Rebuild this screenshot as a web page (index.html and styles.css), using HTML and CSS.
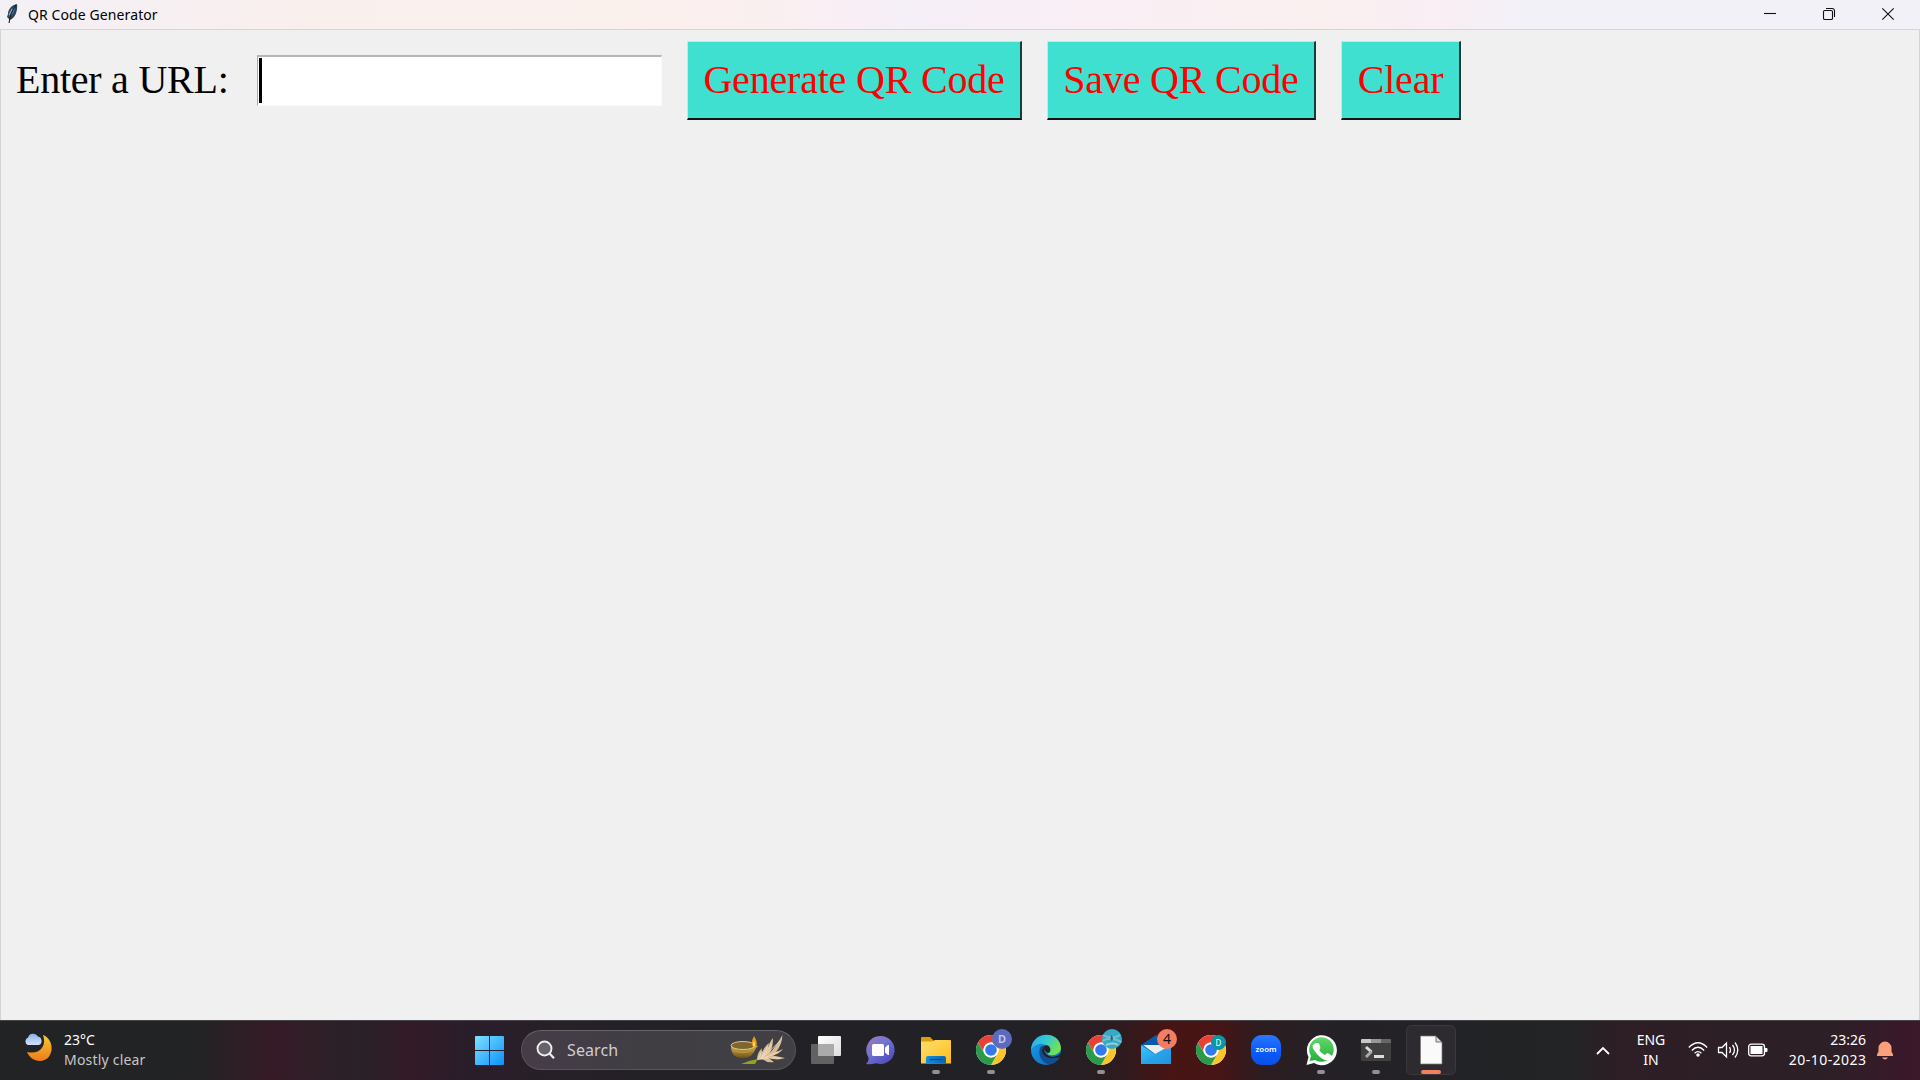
FILE: index.html
```html
<!DOCTYPE html>
<html lang="en">
<head>
<meta charset="utf-8">
<title>QR Code Generator</title>
<link rel="stylesheet" href="styles.css">
</head>
<body>
<div class="desktop">
  <header class="titlebar">
    <svg class="feather" viewBox="0 0 14 22"><path d="M12 1C7 2 3 6 3 11l-1 3 2 2v4l1-3c5-2 8-9 7-16z" fill="#34414d"/><path d="M10 3C6 6 4 10 4 14l2-1c3-3 4-6 4-10z" fill="#3f78bd"/><path d="M11 2C7 7 5 13 4 20" stroke="#10161c" fill="none"/><path d="M7 6l-3 6" stroke="#9db9d2" fill="none"/></svg>
    <h1 class="title">QR Code Generator</h1>
    <div class="controls">
      <svg class="control" viewBox="0 0 14 14"><path d="M1 6.500h12"/></svg>
      <svg class="control" viewBox="0 0 14 14"><rect x="1.500" y="3.500" width="9" height="9" rx="1.300"/><path d="M4 1.500h6.200a2.300 2.300 0 0 1 2.300 2.300V10"/></svg>
      <svg class="control" viewBox="0 0 14 14"><path d="M1.300 1.300l11.400 11.400M12.700 1.300L1.300 12.700"/></svg>
    </div>
  </header>
  <main class="window">
    <div class="form">
      <label class="label" for="url">Enter a URL:</label>
      <div class="entry" id="url"><span class="caret"></span></div>
      <button class="button generate">Generate QR Code</button>
      <button class="button save">Save QR Code</button>
      <button class="button clear">Clear</button>
    </div>
  </main>
  <footer class="taskbar">
    <svg class="defs" width="0" height="0">
      <defs>
        <linearGradient id="moon" x2="0" y2="1"><stop stop-color="#f6c92f"/><stop offset="1" stop-color="#ef7a1c"/></linearGradient>
        <linearGradient id="cloud" x2="0" y2="1"><stop stop-color="#8fb0ee"/><stop offset="1" stop-color="#d3e2fa"/></linearGradient>
        <linearGradient id="win" x2="1" y2="1" gradientUnits="userSpaceOnUse" x1="0" y1="0" gradientTransform="scale(29)"><stop stop-color="#7fe0ff"/><stop offset="1" stop-color="#0a92fb"/></linearGradient>
        <linearGradient id="chat" x2="0.8" y2="1"><stop stop-color="#a777b8"/><stop offset=".45" stop-color="#7176cf"/><stop offset="1" stop-color="#4b49bd"/></linearGradient>
        <linearGradient id="folder" x2="1" y2="1"><stop stop-color="#ffdf70"/><stop offset="1" stop-color="#fdbd16"/></linearGradient>
        <linearGradient id="tray" x2="1"><stop stop-color="#1190df"/><stop offset="1" stop-color="#0964b3"/></linearGradient>
        <linearGradient id="edgeTop" x2="1" y2=".5"><stop stop-color="#28a9ec"/><stop offset=".5" stop-color="#34c7d7"/><stop offset="1" stop-color="#72e34f"/></linearGradient>
        <linearGradient id="edgeSide" x2="1" y2="1"><stop stop-color="#1ca0e8"/><stop offset="1" stop-color="#0864bd"/></linearGradient>
        <linearGradient id="mail" x2="1" y2="1"><stop stop-color="#3cc5fa"/><stop offset="1" stop-color="#158cdd"/></linearGradient>
        <linearGradient id="zoomfill" x2="0" y2="1"><stop stop-color="#2a78ff"/><stop offset=".5" stop-color="#0b5cff"/><stop offset="1" stop-color="#0a50e5"/></linearGradient>
        <linearGradient id="green" x2="0" y2="1"><stop stop-color="#62d86b"/><stop offset="1" stop-color="#20b038"/></linearGradient>
        <linearGradient id="bowl" x2="0" y2="1"><stop stop-color="#d6b65f"/><stop offset="1" stop-color="#735013"/></linearGradient>
        <linearGradient id="pane" x2="1" y2="1"><stop stop-color="#fff"/><stop offset="1" stop-color="#ddd"/></linearGradient>
        <g id="chrome">
          <circle r="15" fill="#fff"/>
          <path d="M-13 -7.500A15 15 0 0 1 13 -7.500L0 -7.500A7.500 7.500 0 0 0 -6.500 3.750Z" fill="#e94235"/>
          <path d="M13 -7.500A15 15 0 0 1 0 15L6.500 3.750A7.500 7.500 0 0 0 0 -7.500Z" fill="#fcc52c"/>
          <path d="M0 15A15 15 0 0 1 -13 -7.500L-6.500 3.750A7.500 7.500 0 0 0 6.500 3.750Z" fill="#2b9a4b"/>
          <circle r="7.500" fill="#fff"/><circle r="5.800" fill="#3279ed"/>
        </g>
      </defs>
    </svg>
    <section class="weather">
      <svg class="weather-icon" viewBox="0 0 30 30"><path d="M19 2c13 5 11 26-3 26-6 0-11-4-13-9 13 3 20-6 16-17z" fill="url(#moon)"/><path d="M4 12a4 4 0 0 1 0-7.500A5.500 5.500 0 0 1 14 3.500a4.500 4.500 0 0 1 1 8.500z" fill="url(#cloud)"/></svg>
      <div class="weather-text"><span class="temperature">23°C</span><span class="condition">Mostly clear</span></div>
    </section>
    <svg class="start" viewBox="0 0 29 29" fill="url(#win)"><path d="M1 0h13v14H0V1a1 1 0 0 1 1-1zM15 0h13a1 1 0 0 1 1 1v13H15zM0 15h14v14H1a1 1 0 0 1-1-1zM15 15h14v13a1 1 0 0 1-1 1H15z"/></svg>
    <div class="search">
      <svg class="search-icon" viewBox="0 0 20 20"><circle cx="8.500" cy="8.500" r="7" fill="#67636d" stroke="#eee" stroke-width="1.900"/><path d="M13.500 13.500l4.500 4.800" stroke="#eee" stroke-width="2.200"/></svg>
      <span class="search-text">Search</span>
      <svg class="diya" viewBox="0 0 56 32">
        <path d="M11 30q9-4 17-5l-3 5z" fill="#93a31b"/>
        <path d="M27 26Q27 19 32 14L31 20Q35 12 39 9L37 18Q39 8 43 4Q43 13 40 19Q47 11 52.500 1Q52 11 46 18L53 15Q49 20 43 21.500L55 24Q47 27 38 23.500L44 28Q37 29 33 25.500z" fill="#d9bd97"/>
        <path d="M28 26L32 17M30 25L38 13M31 25L42 10M31 25L50 7M32 25L48 18M34 24L51 24" stroke="#f4e4cb" fill="none" stroke-width=".8"/>
        <path d="M1 12q0 12 11 12t14-10l2-2-5-1z" fill="url(#bowl)"/><ellipse cx="13" cy="11.500" rx="12" ry="4" fill="#7d6730" stroke="#e0c681"/><path d="M3 16q9 5 20 0" fill="none" stroke="#c49c3c"/>
        <path d="M24 2q5 8 1 12q-6-3-1-12z" fill="#f29b13"/><path d="M24 7q2 4 0 6q-2-2 0-6" fill="#ffe567"/>
      </svg>
    </div>
    <nav class="apps">
      <svg class="app" viewBox="-27 -30 55 60"><rect x="-15" y="-6" width="23" height="20" rx="1" fill="#626262"/><rect x="-8" y="-14" width="23" height="20" rx="1" fill="url(#pane)"/><path d="M-8-6H8V6H-8z" fill="#aaa"/></svg>
      <svg class="app" viewBox="-27 -30 55 60"><path d="M-.5-14A14 14 0 1 1-5 13.200Q-10 14.500-15 14Q-12 11-12.500 7.500A14 14 0 0 1-.5-14z" fill="url(#chat)"/><rect x="-9" y="-6" width="12" height="12" rx="1.500" fill="#fff"/><path d="M4-2.500L7-5h1V5H7L4 2.500z" fill="#fff"/></svg>
      <svg class="app" viewBox="-27 -30 55 60"><path d="M-15-12q0-1 1-1h8l4 4v4h-13z" fill="#dd9e08"/><path d="M-15-8.500h11l3-1.500h15q1 0 1 1v22q0 .5-.5.500h-29q-.5 0-.5-.5z" fill="url(#folder)"/><path d="M-10 13.500V8q0-2 2-2H8q2 0 2 2v5.500z" fill="url(#tray)"/><path d="M-6.500 9.500h13" stroke="#064878" stroke-width="1.200"/><rect class="run" x="-4" y="20" width="8" height="4" rx="2"/></svg>
      <svg class="app" viewBox="-27 -30 55 60"><use href="#chrome"/><circle cx="11" cy="-11" r="10" fill="#5c6bc0"/><text class="badge pale" x="11" y="-7">D</text><rect class="run" x="-4" y="20" width="8" height="4" rx="2"/></svg>
      <svg class="app" viewBox="-27 -30 55 60"><circle r="15" fill="url(#edgeSide)"/><path d="M-15 0C-14-20 14-20 15-2C15 3 9 6 4 5C0 4 3 3 3 0C3-5-3-7-7-6C-11-5-14-3-15 0z" fill="url(#edgeTop)"/><path d="M-6-2C-9 8-1 16 6 13.700C10 12.500 13 9 14 7C5 12-4 5-2-4Q-5-5-6-2z" fill="#114d91"/><path d="M-2-4C-4 3 4 10 13 5L15 3V7L14 7C4 11-4 6-4 0z" fill="#222126"/><path d="M-2-4C4-7 6 1 3 3Q-3 2-2-4z" fill="#222126"/></svg>
      <svg class="app" viewBox="-27 -30 55 60"><use href="#chrome"/><circle cx="11" cy="-11" r="10" fill="#32abc7"/><path d="M2-15q9 5 17 0M1.500-9q8-5 19 1" stroke="#76bfd2" stroke-width="2" fill="none"/><path d="M5-5q7-3 12 0" stroke="#a7cbd1" stroke-width="2" fill="none"/><path d="M10.500-15q3 4 0 6q-2-2 0-6z" fill="#375f7e"/><rect class="run" x="-4" y="20" width="8" height="4" rx="2"/></svg>
      <svg class="app" viewBox="-27 -30 55 60"><path d="M-15-5L0-15 15-5V5h-30z" fill="#075bac"/><path d="M-13-5H13L2 6z" fill="#eee"/><path d="M-15-5L-1 4 15-5V14h-30z" fill="url(#mail)"/><path d="M-15 14L15-5V14z" fill="#2b9ee4" opacity=".5"/><circle cx="11" cy="-11" r="10" fill="#f47d64"/><text class="badge count" x="11" y="-6">4</text></svg>
      <svg class="app" viewBox="-27 -30 55 60"><use href="#chrome"/><circle cx="7.500" cy="-7.500" r="7.500" fill="#0897a7"/><text class="badge small" x="7.500" y="-4.500">D</text></svg>
      <svg class="app" viewBox="-27 -30 55 60"><rect x="-15" y="-15" width="30" height="30" rx="11" fill="url(#zoomfill)"/><text class="zoom" x="0" y="2" textLength="21" lengthAdjust="spacingAndGlyphs">zoom</text></svg>
      <svg class="app" viewBox="-27 -30 55 60"><path d="M-14.500 15L-12.500 7A15 15 0 1 1-7 13z" fill="#fff"/><path d="M-11.500 11L-10 6A12.300 12.300 0 1 1-6 10z" fill="url(#green)"/><path d="M-5-7h2q1 0 2 3t-1 4q3 4 6 5l2-2q1 0 4 2t-2 5Q3 12-4 4T-7-6z" fill="#fff"/><rect class="run" x="-4" y="20" width="8" height="4" rx="2"/></svg>
      <svg class="app" viewBox="-27 -30 55 60"><rect x="-15" y="-11" width="30" height="22" rx="1.500" fill="#404040"/><path d="M-15-7v-3q0-1 1-1h9v4z" fill="#c9c7c9"/><path d="M-5-11H5v4H-5z" fill="#989698"/><path d="M5-11h9q1 0 1 1v3H5z" fill="#686668"/><path d="M-10-3l5.500 5" stroke="#ddd" stroke-width="3"/><path d="M-4.500 1.500L-10 7" stroke="#a9a9a9" stroke-width="3"/><path d="M-2 6.500H8" stroke="#ddd" stroke-width="3"/><rect class="run" x="-4" y="20" width="8" height="4" rx="2"/></svg>
      <svg class="app" viewBox="-27 -30 55 60"><rect x="-24.500" y="-24.500" width="49" height="49" rx="5" fill="#2d2b2f" stroke="#3b393d"/><path d="M-10.500-14H5L11-8V14h-21.500z" fill="#fafafa" stroke="#777" stroke-width=".7"/><path d="M5-14v6h6z" fill="#ddd" stroke="#555" stroke-width=".8"/><rect x="-10" y="20" width="20" height="4" rx="2" fill="#f47d64"/></svg>
    </nav>
    <section class="tray">
      <svg class="chevron" viewBox="0 0 14 9"><path d="M1 8l6-6 6 6"/></svg>
      <div class="language"><span>ENG</span><span>IN</span></div>
      <svg class="status" viewBox="0 0 80 18">
        <path d="M.8 6.500Q10-3 19.200 6.500M3.800 9.500Q10 3 16.200 9.500M6.600 12.200Q10 9 13.400 12.200"/><circle class="solid" cx="10" cy="14" r="1.800"/>
        <path d="M30.500 6.500h3.500L38.500 2v14L34 11.500h-3.500zM41.500 6q2 3 0 6M44.500 4q4 5 0 10M47 1.500q5.500 7.500 0 15"/>
        <rect x="60.700" y="3.200" width="15.800" height="11.600" rx="2.500"/><path class="solid" d="M62.500 5h12v8h-12zM77 7h1.500q1 0 1 1v2q0 1-1 1H77z"/>
      </svg>
      <div class="clock"><span>23:26</span><span class="date">20-10-2023</span></div>
      <svg class="bell" viewBox="0 0 16 19"><path d="M0 15v-1.500l1.500-3V7a6.500 6.500 0 0 1 13 0v3.500l1.500 3V15z" fill="#fba07c"/><path d="M5 16.500h6q-3 4-6 0z" fill="#fba07c"/></svg>
    </section>
  </footer>
</div>
</body>
</html>
```
FILE: styles.css
```css
* { box-sizing: border-box; }
body { margin: 0; overflow: hidden; font-family: "Noto Sans", "Open Sans", sans-serif; }
svg { display: block; flex: none; overflow: visible; }
.desktop { width: 1920px; height: 1080px; display: flex; flex-direction: column; }
.titlebar { height: 30px; display: flex; align-items: center; padding: 0 25px 1px 5px; border-bottom: 1px solid #d6d4d6; background: linear-gradient(90deg, #f3f1f7 0, #f6eff3 110px, #f9efed 320px, #faf0ec 620px, #faeff0 780px, #f9eef5 850px, #f5eff7 900px, #f8eef6 1010px, #faf0f0 1320px, #f8eef4 1450px, #f3f1f8 1520px, #f3f1f8 100%); }
.feather { width: 14px; height: 22px; }
.title { margin: 1px auto 0 9px; font-size: 14px; font-weight: 400; line-height: 20px; letter-spacing: .1px; white-space: nowrap; }
.controls { display: flex; gap: 45px; }
.control { width: 14px; height: 14px; fill: none; stroke: #111; stroke-width: 1.1; }
.window { height: 990px; background: #f0f0f0; border: solid #d4d4d4; border-width: 0 1px; }
.form { display: flex; align-items: center; padding: 11px 0 0 15px; }
.label, .button { font: 40px/46px "Liberation Serif", serif; white-space: nowrap; }
.label { width: 241px; letter-spacing: -.25px; padding-bottom: 2px; }
.entry { width: 405px; height: 51px; background: #fff; border: 1px solid #fafafa; border-top: 2px solid #b5b5b5; border-left: 1px solid #aaa; margin: 0 25px 2px 0; }
.caret { display: block; width: 3px; height: 45px; background: #000; margin: 1px 0 0 1px; }
.button { height: 79px; padding: 0 0 1px; text-align: center; color: #f00; background: #40e0d0; border: 1px solid #8ffff7; border-right: 2px solid #173e3a; border-bottom: 2px solid #111; margin: 0 25px 1px 0; letter-spacing: -.2px; }
.generate { width: 335px; }
.save { width: 269px; }
.clear { width: 120px; }
.taskbar { height: 60px; display: flex; align-items: center; padding-bottom: 1px; border-top: 1px solid #454348; background: linear-gradient(90deg, #212325 0, #232325 200px, #361b27 270px, #2d2028 330px, #2a2128 365px, #341b28 410px, #2b1d2b 460px, #272028 550px, #222126 720px, #222126 1040px, #2d1b1f 1120px, #481414 1170px, #461516 1220px, #2c1c20 1260px, #252126 1320px, #222326 1470px, #222425 1570px, #2e1e26 1620px, #2c2026 1820px, #3b182a 1915px); }
.defs { width: 0; }
.weather { display: flex; align-items: center; width: 475px; padding-left: 24px; gap: 10px; }
.weather-icon { width: 30px; height: 30px; margin-top: -4px; }
.weather-text { display: flex; flex-direction: column; font-size: 14px; line-height: 20px; color: #fff; white-space: nowrap; padding-bottom: 1px; }
.condition { color: #c8c6c8; letter-spacing: .2px; }
.start { width: 29px; height: 29px; }
.search { width: 275px; height: 40px; display: flex; align-items: center; border: 1px solid #57545a; border-top-color: #68646c; border-radius: 20px; margin-left: 17px; padding-left: 14px; background: linear-gradient(90deg, #463c49, #403e43 45%, #414044); }
.search-icon { width: 20px; height: 20px; }
.search-text { color: #d0ced1; font-size: 16px; line-height: 24px; margin-left: 11px; letter-spacing: .1px; }
.diya { width: 56px; height: 32px; margin: 0 9px 0 auto; }
.apps { display: flex; margin-left: 3px; }
.app { width: 55px; height: 60px; }
.run { fill: #929094; }
.badge, .zoom { text-anchor: middle; font-family: "Noto Sans", sans-serif; }
.pale { font-size: 11px; font-weight: 600; fill: #c8cdf0; }
.count { font-size: 14px; fill: #111; }
.small { font-size: 8px; fill: #fff; }
.zoom { font-size: 7.5px; font-weight: 600; fill: #fff; }
.tray { display: flex; align-items: center; margin-left: 137px; color: #fff; font-size: 14px; line-height: 20px; }
.chevron { width: 14px; height: 9px; fill: none; stroke: #fff; stroke-width: 1.8; }
.language { display: flex; flex-direction: column; align-items: center; width: 30px; margin-left: 26px; }
.status { width: 80px; height: 18px; margin-left: 22px; fill: none; stroke: #fff; stroke-width: 1.3; }
.solid { fill: #fff; stroke: none; }
.clock { display: flex; flex-direction: column; align-items: flex-end; width: 98px; white-space: nowrap; padding-bottom: 1px; }
.date { letter-spacing: .45px; margin-right: -.45px; }
.bell { width: 16px; height: 19px; margin: 1px 0 0 11px; }
```
